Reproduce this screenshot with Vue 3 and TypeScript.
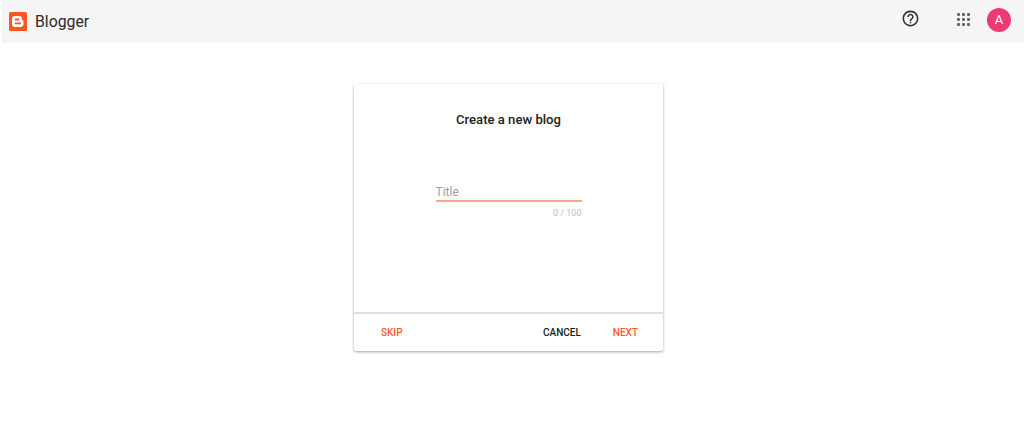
<template>
  <div class="page">
    <header class="topbar">
      <div class="brand">
        <svg class="logo" viewBox="0 0 18 19" width="18" height="19">
          <rect width="18" height="19" rx="1.500" fill="#ff5722" />
          <path
            d="M5.800 4h4.600c1.500 0 2.600 1.100 2.600 2.500v1c0 .6.400.8.800.8.400 0 .7.300.7.800v2.900c0 1.600-1.300 3-3 3H5.800c-1.600 0-2.800-1.300-2.800-3V6.800C3 5.300 4.200 4 5.800 4z"
            fill="#fff"
          />
          <rect x="5.800" y="6.500" width="4.400" height="1.900" rx=".9" fill="#ff5722" />
          <rect x="5.800" y="10.400" width="6.200" height="1.900" rx=".9" fill="#ff5722" />
        </svg>
        <span class="brand-name">Blogger</span>
      </div>
      <div class="actions">
        <svg class="help" viewBox="0 0 24 24" width="19" height="19">
          <path
            d="M11 18h2v-2h-2v2zm1-16C6.480 2 2 6.480 2 12s4.480 10 10 10 10-4.480 10-10S17.520 2 12 2zm0 18c-4.410 0-8-3.590-8-8s3.590-8 8-8 8 3.590 8 8-3.590 8-8 8zm0-14c-2.210 0-4 1.790-4 4h2c0-1.100.9-2 2-2s2 .9 2 2c0 2-3 1.750-3 5h2c0-2.250 3-2.500 3-5 0-2.210-1.790-4-4-4z"
            fill="#333"
          />
        </svg>
        <div class="apps">
          <i v-for="n in 9" :key="n"></i>
        </div>
        <div class="avatar">A</div>
      </div>
    </header>

    <main class="content">
      <section class="card">
        <h1 class="card-title">Create a new blog</h1>
        <div class="card-body">
          <div class="field">
            <div class="field-label">Title</div>
            <div class="field-line"></div>
            <div class="field-count">0 / 100</div>
          </div>
        </div>
        <footer class="card-actions">
          <button class="btn accent">SKIP</button>
          <div class="right-actions">
            <button class="btn">CANCEL</button>
            <button class="btn accent">NEXT</button>
          </div>
        </footer>
      </section>
    </main>
  </div>
</template>

<script setup lang="ts">
</script>

<style>
html,
body {
  margin: 0;
  background: #fff;
}
</style>

<style scoped>
.page {
  height: 436px;
  overflow: hidden;
  background: #fff;
  font-family: Roboto, "Liberation Sans", sans-serif;
}
.topbar {
  height: 43px;
  margin-left: 2px;
  padding: 0 13px 0 7px;
  background: #f5f5f5;
  display: flex;
  align-items: center;
  justify-content: space-between;
}
.brand {
  display: flex;
  align-items: center;
  gap: 8px;
}
.logo {
  display: block;
}
.brand-name {
  font-size: 15.800px;
  color: #2b2b2b;
}
.actions {
  display: flex;
  align-items: center;
  margin-bottom: 4px;
}
.help {
  display: block;
  margin-right: 37px;
  margin-bottom: 3px;
}
.apps {
  display: grid;
  grid-template-columns: repeat(3, 3px);
  gap: 2px;
  margin-right: 17px;
}
.apps i {
  width: 3px;
  height: 3px;
  border-radius: 1px;
  background: #666;
}
.avatar {
  width: 24px;
  height: 24px;
  border-radius: 50%;
  background: #ee3a72;
  color: #fff;
  font-size: 13px;
  display: flex;
  align-items: center;
  justify-content: center;
}
.content {
  display: flex;
  justify-content: center;
  padding: 41px 7px 0 0;
}
.card {
  width: 309px;
  height: 267px;
  background: #fff;
  border-radius: 2px;
  box-shadow: 0 1px 3px rgba(0, 0, 0, 0.36);
  display: flex;
  flex-direction: column;
}
.card-title {
  margin: 28px 0 0;
  font-size: 13.100px;
  line-height: 16px;
  font-weight: 500;
  text-align: center;
  color: #212121;
}
.card-body {
  flex: 1;
  display: flex;
  justify-content: center;
  padding-top: 55px;
}
.field {
  width: 146px;
}
.field-label {
  height: 17px;
  font-size: 12px;
  line-height: 18px;
  color: #a0a0a0;
}
.field-line {
  height: 2px;
  background: #ffa48c;
}
.field-count {
  margin-top: 5px;
  font-size: 9px;
  line-height: 12px;
  text-align: right;
  color: #bdbdbd;
}
.card-actions {
  height: 37px;
  border-top: 2px solid #e0e0e0;
  padding: 0 25px 0 27px;
  display: flex;
  align-items: center;
  justify-content: space-between;
}
.right-actions {
  display: flex;
  gap: 32px;
}
.btn {
  padding: 0;
  border: 0;
  background: none;
  font: 500 10px Roboto, "Liberation Sans", sans-serif;
  color: #212121;
}
.btn.accent {
  color: #ff5722;
}
</style>
